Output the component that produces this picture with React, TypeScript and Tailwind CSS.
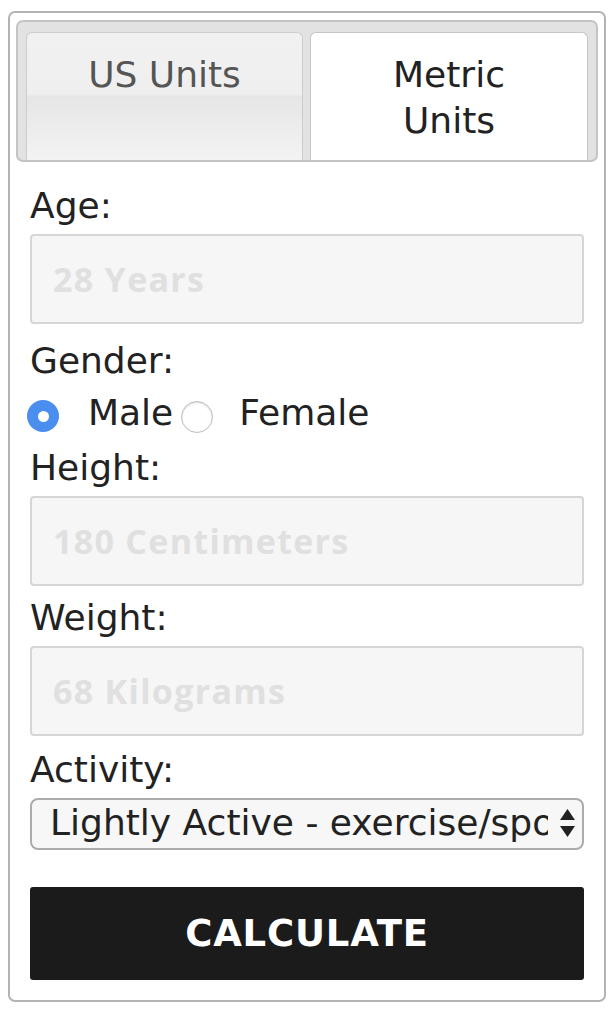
import React from "react";

const sans = { fontFamily: '"DejaVu Sans", Verdana, sans-serif' };

function Label({ children, mt }: { children: React.ReactNode; mt: string }) {
  return (
    <div className={`${mt} text-[36px] leading-[42px] text-[#222]`}>{children}</div>
  );
}

function Field({ placeholder }: { placeholder: string }) {
  return (
    <div className="mt-[7px] h-[90px] border-2 border-[#d6d6d6] rounded-[4px] bg-[#f6f6f6] flex items-center pl-[21px]">
      <span
        className="text-[34px] font-bold text-[#e0e0e0] tracking-[1.3px]"
        style={{ fontFamily: '"Open Sans", "Noto Sans", sans-serif' }}
      >
        {placeholder}
      </span>
    </div>
  );
}

export default function App() {
  return (
    <div className="w-[616px] h-[1010px] bg-white pt-[11px] pl-[8px]" style={sans}>
      <div className="w-[598px] h-[991px] border-2 border-[#b3b3b3] rounded-[7px] px-[6px] pt-[7px]">
        <div className="border-2 border-[#c4c4c4] rounded-[7px] bg-[#e2e2e2] px-[8px] pt-[10px] flex gap-[7px]">
          <div className="w-[277px] h-[128px] border border-b-0 border-[#cdcdcd] rounded-t-[6px] pt-[19px] text-center text-[36px] leading-[46px] text-[#555] bg-[linear-gradient(to_bottom,#f1f1f1_0%,#efefef_48%,#e6e6e6_50%,#f3f3f3_100%)]">
            US Units
          </div>
          <div className="flex-1 h-[128px] border border-b-0 border-[#c6c6c6] rounded-t-[6px] pt-[19px] text-center text-[36px] leading-[46px] text-[#222] bg-white">
            Metric
            <br />
            Units
          </div>
        </div>

        <div className="px-[14px]">
          <Label mt="mt-[23px]">Age:</Label>
          <Field placeholder="28 Years" />

          <Label mt="mt-[16px]">Gender:</Label>
          <div className="mt-[10px] h-[42px] flex items-start text-[36px] leading-[42px] text-[#222]">
            <div className="ml-[-3px] mt-[8px] w-[32px] h-[32px] rounded-full bg-[#4a8ff0] flex items-center justify-center shrink-0">
              <div className="w-[11px] h-[11px] rounded-full bg-white" />
            </div>
            <span className="ml-[29px]">Male</span>
            <div className="ml-[8px] mt-[9px] w-[32px] h-[32px] rounded-full bg-white border border-[#bdbdbd] shadow-[inset_0_1px_2px_rgba(0,0,0,0.15)] shrink-0" />
            <span className="ml-[26px]">Female</span>
          </div>

          <Label mt="mt-[13px]">Height:</Label>
          <Field placeholder="180 Centimeters" />

          <Label mt="mt-[11px]">Weight:</Label>
          <Field placeholder="68 Kilograms" />

          <Label mt="mt-[13px]">Activity:</Label>
          <div className="mt-[7px] h-[52px] border-2 border-[#acacac] rounded-[8px] bg-[#f7f7f7] flex items-center pl-[18px] pr-[6px] pb-[3px]">
            <div className="flex-1 overflow-hidden whitespace-nowrap text-[36px] leading-[42px] text-[#222] mr-[11px]">
              Lightly Active - exercise/sports 1-3 times/week
            </div>
            <svg width="17" height="32" viewBox="0 0 17 32" className="shrink-0">
              <polygon points="8.5,2 16,13 1,13" fill="#222" />
              <polygon points="1,19 16,19 8.5,30" fill="#222" />
            </svg>
          </div>

          <div className="mt-[37px] h-[93px] bg-[#1b1b1b] rounded-[3px] flex items-center justify-center">
            <span className="text-[37px] font-bold text-white tracking-[0.8px] leading-[44px]">
              CALCULATE
            </span>
          </div>
        </div>
      </div>
    </div>
  );
}
